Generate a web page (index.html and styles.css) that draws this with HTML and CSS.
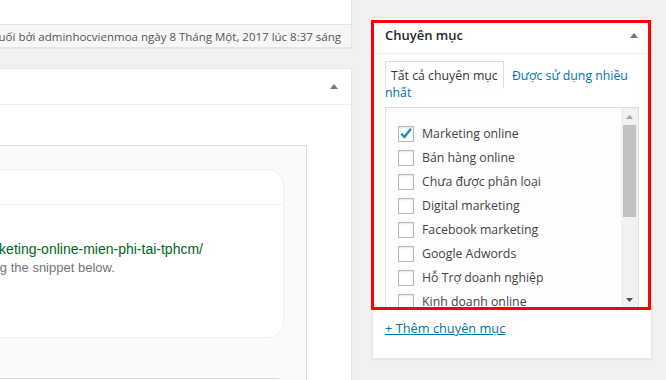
FILE: index.html
```html
<!DOCTYPE html>
<html lang="vi">
<head>
    <meta charset="UTF-8">
    <title>Chuyên mục</title>
    <link rel="stylesheet" href="styles.css">
</head>
<body>
    <div class="page">
        <div class="main-col">
            <div class="postbox editor-box">
                <div class="editor-area"></div>
                <div class="status-info">
                    <span>Sửa lần cuối bởi adminhocvienmoa ngày 8 Tháng Một, 2017 lúc 8:37 sáng</span>
                </div>
            </div>

            <div class="postbox seo-box">
                <div class="box-head"><span class="toggle-arrow"></span></div>
                <div class="box-inside">
                    <div class="snippet-wrap">
                        <div class="snippet-card">
                            <div class="snippet-head"></div>
                            <div class="snippet-body">
                                <div class="snippet-url">https://hocvienmoa.com/khoa-hoc-marketing-online-mien-phi-tai-tphcm/</div>
                                <div class="snippet-desc">Please provide a meta description by editing the snippet below.</div>
                            </div>
                        </div>
                        <div class="snippet-next"></div>
                    </div>
                </div>
            </div>
        </div>

        <div class="side-col">
            <div class="postbox category-box">
                <div class="box-head">
                    <h2>Chuyên mục</h2>
                    <span class="toggle-arrow"></span>
                </div>
                <div class="box-inside">
                    <ul class="category-tabs">
                        <li class="active">Tất cả chuyên mục</li>
                        <li><a href="#">Được sử dụng nhiều nhất</a></li>
                    </ul>
                    <div class="tabs-panel">
                        <ul class="checklist">
                            <li><span class="check"><svg width="14" height="14" viewBox="0 0 14 14"><polyline points="2.2,6.6 5.4,10 12,1.8" fill="none" stroke="#1e8cbe" stroke-width="2.4"/></svg></span>Marketing online</li>
                            <li><span class="check"></span>Bán hàng online</li>
                            <li><span class="check"></span>Chưa được phân loại</li>
                            <li><span class="check"></span>Digital marketing</li>
                            <li><span class="check"></span>Facebook marketing</li>
                            <li><span class="check"></span>Google Adwords</li>
                            <li><span class="check"></span>Hỗ Trợ doanh nghiệp</li>
                            <li><span class="check"></span>Kinh doanh online</li>
                            <li><span class="check"></span>Quảng cáo</li>
                            <li><span class="check"></span>SEO</li>
                        </ul>
                        <div class="scrollbar">
                            <div class="sb-btn"><svg width="7" height="4" viewBox="0 0 7 4"><polygon points="0,4 3.5,0 7,4" fill="#a3a3a3"/></svg></div>
                            <div class="sb-thumb"></div>
                            <div class="sb-btn sb-down"><svg width="7" height="4" viewBox="0 0 7 4"><polygon points="0,0 7,0 3.5,4" fill="#505050"/></svg></div>
                        </div>
                    </div>
                    <div class="cat-adder"><a href="#">+ Thêm chuyên mục</a></div>
                </div>
            </div>
            <div class="highlight"></div>
        </div>
    </div>
</body>
</html>
```

FILE: styles.css
```css
* {
    box-sizing: border-box;
}

html, body {
    margin: 0;
    height: 100%;
}

body {
    background: #f1f1f1;
    font-family: "Open Sans", "Noto Sans", sans-serif;
    font-size: 12.3px;
    color: #444;
    overflow: hidden;
}

.page {
    display: flex;
    align-items: flex-start;
    height: 380px;
    overflow: hidden;
}

.main-col {
    flex: none;
    width: 652px;
    margin-left: -300px;
}

.postbox {
    background: #fff;
    border: 1px solid #e5e5e5;
    box-shadow: 0 1px 1px rgba(0, 0, 0, 0.04);
}

.editor-box {
    border-top: 0;
}

.editor-area {
    height: 24px;
}

.status-info {
    height: 23px;
    display: flex;
    justify-content: flex-end;
    padding: 0 10px;
    border-top: 1px solid #e5e5e5;
    background: #f7f7f7;
    font-size: 11.5px;
    line-height: 23px;
    color: #555;
    white-space: nowrap;
    overflow: hidden;
}

.seo-box {
    margin-top: 20px;
    height: 312px;
    border-bottom: 0;
}

.box-head {
    height: 36px;
    display: flex;
    align-items: center;
    padding: 0 13px 0 12px;
    border-bottom: 1px solid #eee;
}

.box-head h2 {
    margin: 0;
    font-size: 13px;
    font-weight: 600;
    line-height: 35px;
    color: #23282d;
}

.toggle-arrow {
    margin-left: auto;
    width: 0;
    height: 0;
    border-left: 4px solid transparent;
    border-right: 4px solid transparent;
    border-bottom: 5px solid #72777c;
}

.seo-box .box-inside {
    padding: 40px 44px 0 12px;
}

.snippet-wrap {
    height: 235px;
    padding: 23px 22px 0;
    border: 1px solid #ddd;
    border-bottom: 0;
    background: #fafafa;
}

.snippet-card {
    background: #fff;
    border: 1px solid #f0f0f0;
    border-radius: 16px;
}

.snippet-head {
    height: 35px;
    border-bottom: 1px solid #f1f1f1;
}

.snippet-body {
    padding: 34px 0 60px 24px;
    font-family: "Liberation Sans", Arial, sans-serif;
    white-space: nowrap;
}

.snippet-url {
    font-size: 14px;
    line-height: 20px;
    color: #006621;
}

.snippet-desc {
    margin-left: -9px;
    font-size: 13px;
    line-height: 18px;
    color: #70757a;
}

.snippet-next {
    margin: 40px 5px 0 0;
    height: 2px;
    border-top: 1px solid #ddd;
    background: #fff;
}

.side-col {
    flex: none;
    position: relative;
    width: 280px;
    margin: 17px 0 0 20px;
}

.category-box .box-inside {
    padding: 0 12px 12px;
}

.category-tabs {
    list-style: none;
    margin: 14px 0 6px;
    padding: 0;
    line-height: 16.5px;
}

.category-tabs li {
    display: inline;
}

.category-tabs .active {
    padding: 5px 5px 4px;
    border: 1px solid #ddd;
    border-bottom-color: #fdfdfd;
    background: #fdfdfd;
    color: #32373c;
}

.category-tabs a {
    padding-left: 5px;
    color: #0073aa;
    text-decoration: none;
}

.tabs-panel {
    height: 202px;
    display: flex;
    border: 1px solid #ddd;
    background: #fdfdfd;
}

.checklist {
    flex: 1;
    list-style: none;
    margin: 0;
    padding: 14px 0 0 12px;
    overflow: hidden;
}

.checklist li {
    height: 24px;
    display: flex;
    align-items: center;
    line-height: 24px;
    white-space: nowrap;
}

.check {
    flex: none;
    width: 16px;
    height: 16px;
    margin-right: 8px;
    border: 1px solid #b4b9be;
    background: #fff;
    box-shadow: inset 0 1px 2px rgba(0, 0, 0, 0.1);
}

.check svg {
    display: block;
}

.scrollbar {
    flex: none;
    width: 17px;
    display: flex;
    flex-direction: column;
    background: #f1f1f1;
}

.sb-btn {
    height: 17px;
    display: flex;
    align-items: center;
    justify-content: center;
}

.sb-down {
    margin-top: auto;
}

.sb-thumb {
    height: 92px;
    margin: 0 2px;
    background: #c1c1c1;
}

.cat-adder {
    margin-top: 10px;
    padding-bottom: 9px;
    line-height: 18px;
    font-size: 12.8px;
}

.cat-adder a {
    color: #0073aa;
    text-decoration: underline;
}

.highlight {
    position: absolute;
    left: -1px;
    top: 3px;
    width: 280px;
    height: 290px;
    border: 3px solid #f00;
}
```
